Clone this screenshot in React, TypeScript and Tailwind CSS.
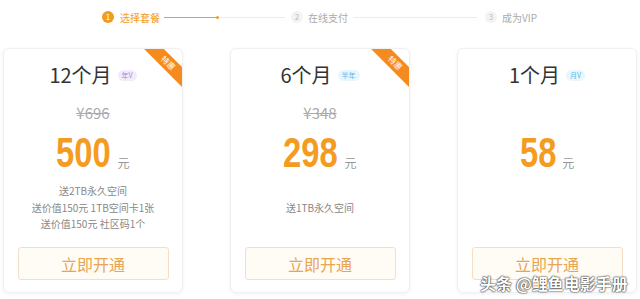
import { CSSProperties } from 'react'

interface Plan {
  title: string
  tag: string
  tagClass: string
  original?: string
  price: string
  hot: boolean
  benefits: string[]
}

const plans: Plan[] = [
  {
    title: '12个月',
    tag: '年V',
    tagClass: 'bg-[#f1ebfb] text-[#a98ad9]',
    original: '¥696',
    price: '500',
    hot: true,
    benefits: ['送2TB永久空间', '送价值150元 1TB空间卡1张', '送价值150元 社区码1个'],
  },
  {
    title: '6个月',
    tag: '半年',
    tagClass: 'bg-[#e8f6fd] text-[#5cb8e8]',
    original: '¥348',
    price: '298',
    hot: true,
    benefits: ['送1TB永久空间'],
  },
  {
    title: '1个月',
    tag: '月V',
    tagClass: 'bg-[#e8f6fd] text-[#5cb8e8]',
    price: '58',
    hot: false,
    benefits: [],
  },
]

const font: CSSProperties = {
  fontFamily: '"Noto Sans CJK SC", "Noto Sans", sans-serif',
}

function Steps() {
  return (
    <div className="flex h-[34px] items-center pl-[102px] text-[10px] text-[#aaa]">
      {/* step 1 */}
      <div className="flex h-[12px] w-[12px] items-center justify-center rounded-full bg-[#f39c1f] text-[8px] leading-none text-white">
        1
      </div>
      <span className="ml-[6px] text-[#f39c1f]">选择套餐</span>
      <div className="ml-[4px] h-px w-[52px] bg-[#f39c1f]" />
      <div className="h-[3px] w-[3px] rounded-full bg-[#f39c1f]" />
      <div className="h-px w-[66px] bg-[#ececec]" />
      {/* step 2 */}
      <div className="ml-[6px] flex h-[12px] w-[12px] items-center justify-center rounded-full bg-[#f3f3f3] text-[8px] leading-none text-[#bbb]">
        2
      </div>
      <span className="ml-[5px]">在线支付</span>
      <div className="ml-[5px] h-px w-[124px] bg-[#ececec]" />
      {/* step 3 */}
      <div className="ml-[8px] flex h-[12px] w-[12px] items-center justify-center rounded-full bg-[#f3f3f3] text-[8px] leading-none text-[#bbb]">
        3
      </div>
      <span className="ml-[5px]">成为VIP</span>
    </div>
  )
}

function PlanCard({ plan }: { plan: Plan }) {
  // condensed digits: scaled horizontally, so pull the layout box in to match
  const squeeze = -Math.round(plan.price.length * 23.4 * 0.22)
  return (
    <div className="relative flex h-[245px] w-[180px] flex-col items-center rounded-[6px] border border-[#f0f0f0] bg-white pt-[12px] pb-[12px] shadow-[0_1px_4px_rgba(0,0,0,0.06)]">
      {/* ribbon */}
      {plan.hot && (
        <div className="absolute top-0 right-0 h-[40px] w-[40px] overflow-hidden rounded-tr-[6px]">
          <div className="absolute top-[7px] left-[-4px] flex h-[14px] w-[60px] rotate-45 items-center justify-center bg-[#f58b1f] text-[8px] leading-none text-white">
            特惠
          </div>
        </div>
      )}

      {/* title */}
      <div className="flex h-[28px] items-center">
        <span className="text-[20px] leading-none text-[#333]">{plan.title}</span>
        <span className={`ml-[6px] rounded-full px-[4px] py-[1px] text-[7px] leading-[9px] ${plan.tagClass}`}>
          {plan.tag}
        </span>
      </div>

      {/* original price */}
      <div className="mt-[12px] flex h-[24px] items-center text-[15px] text-[#aaa] line-through">
        {plan.original ?? ''}
      </div>

      {/* price */}
      <div className="mt-[6px] flex h-[44px] items-end">
        <span
          className="inline-block origin-left scale-x-[0.78] text-[42px] leading-[44px] font-bold text-[#f39c1f]"
          style={{ fontFamily: '"Liberation Sans", Arial, sans-serif', marginRight: squeeze }}
        >
          {plan.price}
        </span>
        <span className="mb-[6px] ml-[6px] text-[12px] leading-none text-[#999]">元</span>
      </div>

      {/* benefits */}
      <div className="flex h-[66px] flex-col items-center justify-center text-[10px] leading-[16.5px] text-[#888]">
        {plan.benefits.map((b) => (
          <div key={b}>{b}</div>
        ))}
      </div>

      {/* button */}
      <div className="mt-[6px] flex h-[33px] w-[151px] items-center justify-center rounded-[3px] border border-[#f4dfc6] bg-[#fffbf5] text-[16px] text-[#eaa552]">
        立即开通
      </div>
    </div>
  )
}

export default function App() {
  return (
    <div className="relative h-[299px] w-[640px] overflow-hidden bg-white" style={font}>
      <Steps />
      <div className="mt-[14px] flex gap-[47px] pl-[3px]">
        {plans.map((p) => (
          <PlanCard key={p.title} plan={p} />
        ))}
      </div>
      {/* watermark */}
      <div className="absolute top-[273px] left-[480px] text-[16px] leading-[20px] font-bold text-white [text-shadow:0_0_2px_#222,0_0_1px_#000]">
        头条 @鲤鱼电影手册
      </div>
    </div>
  )
}
